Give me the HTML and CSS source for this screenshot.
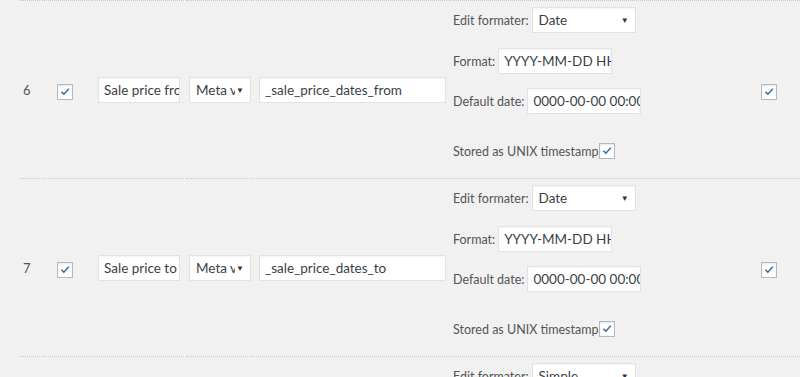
FILE: index.html
```html
<!DOCTYPE html>
<html lang="en">
<head>
    <meta charset="UTF-8">
    <meta name="viewport" content="width=device-width, initial-scale=1.0">
    <title>Field mapping</title>
    <link rel="stylesheet" href="styles.css">
</head>
<body>
    <table class="fields">
        <colgroup>
            <col class="c-num"><col class="c-chk"><col class="c-name"><col class="c-type"><col class="c-key"><col class="c-fmt"><col class="c-last">
        </colgroup>
        <tr>
            <td class="num">6</td>
            <td class="chk"><span class="box"><svg viewBox="0 0 16 16"><path d="M3.2 8.2l1.3-1.2 2.3 2.2 4.9-5.4 1.3 1.1-6.2 6.8z"/></svg></span></td>
            <td class="name"><span class="text w-name">Sale price from</span></td>
            <td class="type"><span class="select w-type"><span class="val">Meta value</span></span></td>
            <td class="key"><span class="text w-key">_sale_price_dates_from</span></td>
            <td class="fmt">
                <div class="line first"><span class="lbl">Edit formater:</span><span class="select w-fmt"><span class="val">Date</span></span></div>
                <div class="line"><span class="lbl">Format:</span><span class="text w-date">YYYY-MM-DD HH:mm:ss</span></div>
                <div class="line"><span class="lbl">Default date:</span><span class="text w-date">0000-00-00 00:00:00</span></div>
                <div class="line stamp"><span class="lbl">Stored as UNIX timestamp</span><span class="box"><svg viewBox="0 0 16 16"><path d="M3.2 8.2l1.3-1.2 2.3 2.2 4.9-5.4 1.3 1.1-6.2 6.8z"/></svg></span></div>
            </td>
            <td class="last"><span class="box"><svg viewBox="0 0 16 16"><path d="M3.2 8.2l1.3-1.2 2.3 2.2 4.9-5.4 1.3 1.1-6.2 6.8z"/></svg></span></td>
        </tr>
        <tr>
            <td class="num">7</td>
            <td class="chk"><span class="box"><svg viewBox="0 0 16 16"><path d="M3.2 8.2l1.3-1.2 2.3 2.2 4.9-5.4 1.3 1.1-6.2 6.8z"/></svg></span></td>
            <td class="name"><span class="text w-name">Sale price to</span></td>
            <td class="type"><span class="select w-type"><span class="val">Meta value</span></span></td>
            <td class="key"><span class="text w-key">_sale_price_dates_to</span></td>
            <td class="fmt">
                <div class="line first"><span class="lbl">Edit formater:</span><span class="select w-fmt"><span class="val">Date</span></span></div>
                <div class="line"><span class="lbl">Format:</span><span class="text w-date">YYYY-MM-DD HH:mm:ss</span></div>
                <div class="line"><span class="lbl">Default date:</span><span class="text w-date">0000-00-00 00:00:00</span></div>
                <div class="line stamp"><span class="lbl">Stored as UNIX timestamp</span><span class="box"><svg viewBox="0 0 16 16"><path d="M3.2 8.2l1.3-1.2 2.3 2.2 4.9-5.4 1.3 1.1-6.2 6.8z"/></svg></span></div>
            </td>
            <td class="last"><span class="box"><svg viewBox="0 0 16 16"><path d="M3.2 8.2l1.3-1.2 2.3 2.2 4.9-5.4 1.3 1.1-6.2 6.8z"/></svg></span></td>
        </tr>
        <tr>
            <td class="num"></td>
            <td class="chk"></td>
            <td class="name"></td>
            <td class="type"></td>
            <td class="key"></td>
            <td class="fmt">
                <div class="line first"><span class="lbl">Edit formater:</span><span class="select w-fmt"><span class="val">Simple</span></span></div>
            </td>
            <td class="last"></td>
        </tr>
    </table>
</body>
</html>
```

FILE: styles.css
```css
body {
    margin: 0;
    padding: 0;
    background-color: #f1f1f1;
    color: #555;
    font-family: 'Segoe UI', Lato, 'Noto Sans', sans-serif;
    font-size: 12.5px;
    overflow: hidden;
}
.fields {
    table-layout: fixed;
    border-collapse: separate;
    border-spacing: 2px 0;
    margin-left: 18px;
    width: 784px;
}
.c-num { width: 20px; }
.c-chk { width: 51px; }
.c-name { width: 89px; }
.c-type { width: 68px; }
.c-key { width: 191px; }
.c-fmt { width: 296px; }
.c-last { width: 53px; }
.fields td {
    border-top: 1px dotted #c8c8c8;
    padding: 0;
    vertical-align: middle;
    white-space: nowrap;
}
.fields td.num {
    padding-left: 3px;
    font-size: 13px;
    color: #555;
}
.fields td.chk {
    padding-left: 15px;
}
.fields td.name,
.fields td.type,
.fields td.key {
    padding-left: 3px;
}
.fields td.fmt {
    padding: 6px 0 19px 4px;
    vertical-align: top;
}
.fields td.last {
    padding-left: 14px;
}
/* inputs */
.text, .select {
    display: inline-block;
    box-sizing: border-box;
    height: 26px;
    line-height: 24px;
    padding: 0 5px;
    background: #fff;
    border: 1px solid #e2e2e2;
    box-shadow: inset 0 1px 2px rgba(0, 0, 0, 0.05);
    color: #3a3f44;
    font-size: 13.5px;
    overflow: hidden;
    vertical-align: middle;
}
.select {
    position: relative;
    padding: 0 15px 0 6px;
}
.select .val {
    display: block;
    overflow: hidden;
}
.select::after {
    content: '\25BC';
    position: absolute;
    right: 6px;
    top: 0;
    font-size: 8px;
    color: #333;
}
.w-name { width: 82px; }
.w-type { width: 62px; }
.w-key { width: 187px; }
.w-fmt { width: 104px; }
.w-date { width: 114px; }
/* checkbox */
.box {
    display: inline-block;
    box-sizing: border-box;
    width: 16px;
    height: 16px;
    background: #fff;
    border: 1px solid #b4b9be;
    box-shadow: inset 0 1px 2px rgba(0, 0, 0, 0.1);
    vertical-align: middle;
    position: relative;
    top: 2px;
}
.box svg {
    display: block;
    width: 14px;
    height: 14px;
    fill: #40709e;
}
/* formatter lines */
.line {
    display: flex;
    align-items: center;
    height: 26px;
    margin-top: 15px;
}
.line.first {
    margin-top: 0;
}
.line + .line + .line {
    margin-top: 14px;
}
.line + .line + .line.stamp {
    height: 16px;
    margin-top: 29px;
}
.line.stamp .box {
    top: 0;
}
.lbl {
    margin-right: 3px;
}
.line.stamp .lbl {
    margin-right: 1px;
}
```
